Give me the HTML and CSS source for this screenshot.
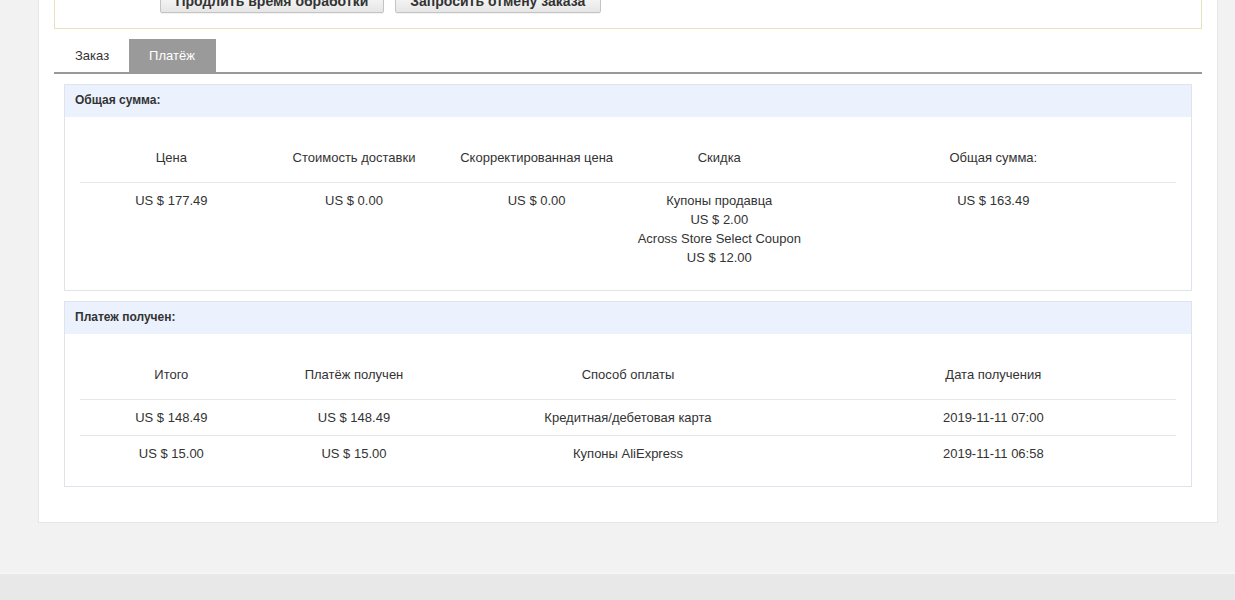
FILE: index.html
```html
<!DOCTYPE html>
<html lang="ru">
<head>
<meta charset="utf-8">
<title>Платёж</title>
<link rel="stylesheet" href="styles.css">
</head>
<body>
<div class="page">
  <div class="panel">
    <div class="notice">
      <div class="actions">
        <button class="btn" type="button">Продлить время обработки</button>
        <button class="btn" type="button">Запросить отмену заказа</button>
      </div>
    </div>

    <div class="tabs">
      <div class="tab">Заказ</div>
      <div class="tab tab-active">Платёж</div>
    </div>

    <div class="section">
      <div class="section-head">Общая сумма:</div>
      <div class="section-body">
        <table class="grid">
          <colgroup>
            <col class="c1"><col class="c1"><col class="c1"><col class="c1"><col class="c2">
          </colgroup>
          <thead>
            <tr>
              <th>Цена</th>
              <th>Стоимость доставки</th>
              <th>Скорректированная цена</th>
              <th>Скидка</th>
              <th>Общая сумма:</th>
            </tr>
          </thead>
          <tbody>
            <tr>
              <td>US $ 177.49</td>
              <td>US $ 0.00</td>
              <td>US $ 0.00</td>
              <td>Купоны продавца<br>US $ 2.00<br>Across Store Select Coupon<br>US $ 12.00</td>
              <td>US $ 163.49</td>
            </tr>
          </tbody>
        </table>
      </div>
    </div>

    <div class="section">
      <div class="section-head">Платеж получен:</div>
      <div class="section-body">
        <table class="grid">
          <colgroup>
            <col class="c1"><col class="c1"><col class="c2"><col class="c2">
          </colgroup>
          <thead>
            <tr>
              <th>Итого</th>
              <th>Платёж получен</th>
              <th>Способ оплаты</th>
              <th>Дата получения</th>
            </tr>
          </thead>
          <tbody>
            <tr>
              <td>US $ 148.49</td>
              <td>US $ 148.49</td>
              <td>Кредитная/дебетовая карта</td>
              <td>2019-11-11 07:00</td>
            </tr>
            <tr>
              <td>US $ 15.00</td>
              <td>US $ 15.00</td>
              <td>Купоны AliExpress</td>
              <td>2019-11-11 06:58</td>
            </tr>
          </tbody>
        </table>
      </div>
    </div>
  </div>
  <div class="footer"></div>
</div>
</body>
</html>
```

FILE: styles.css
```css
html, body {
  margin: 0;
  padding: 0;
  height: 100%;
  overflow: hidden;
}

body {
  background: #f2f2f2;
  font-family: "Liberation Sans", Arial, sans-serif;
  font-size: 13px;
  color: #333;
}

.page {
  padding: 0 17px 0 38px;
}

.panel {
  margin-top: -26px;
  background: #fff;
  border: 1px solid #e6e6e6;
  border-top: 0;
  padding: 0 15px 35px 15px;
}

.notice {
  border: 1px solid #e6e2bc;
  background: #fff;
  padding: 14px 0 15px 105px;
}

.actions {
  display: flex;
  gap: 11px;
}

.btn {
  height: 24px;
  padding: 0 14.5px;
  border: 1px solid #c4c4c4;
  border-radius: 2px;
  background: linear-gradient(#fdfdfd, #e6e6e6);
  font-family: "Liberation Sans", Arial, sans-serif;
  font-size: 14px;
  font-weight: bold;
  color: #333;
  box-shadow: 0 1px 0 rgba(0,0,0,0.05);
}

.tabs {
  display: flex;
  margin-top: 10px;
  border-bottom: 2px solid #999;
}

.tab {
  height: 33px;
  line-height: 33px;
  padding: 0 20px 0 21px;
  font-size: 13px;
  color: #333;
  background: #fff;
}

.tab-active {
  background: #9a9a9a;
  color: #fff;
  padding: 0 21px 0 20px;
}

.section {
  margin: 10px 10px 0 10px;
  border: 1px solid #dfe4ec;
}

.section-head {
  height: 32px;
  line-height: 31px;
  padding: 0 10px;
  background: #ecf2fd;
  font-weight: bold;
  font-size: 12px;
  color: #333;
}

.section-body {
  padding: 15px;
}

.grid {
  width: 100%;
  border-collapse: collapse;
  table-layout: fixed;
  font-size: 13px;
}

.c1 { width: 16.666%; }
.c2 { width: 33.333%; }

.grid th {
  height: 48px;
  padding: 2px 0 0 0;
  font-weight: normal;
  text-align: center;
  vertical-align: middle;
  border-bottom: 1px solid #e6e6e6;
  line-height: 16px;
}

.grid td {
  padding: 8px 0;
  text-align: center;
  vertical-align: top;
  line-height: 19px;
  border-bottom: 1px solid #e6e6e6;
}

.grid tbody tr:last-child td {
  border-bottom: 0;
}

.footer {
  margin: 49px -17px 0 -38px;
  border-top: 2px solid #f6f6f6;
  height: 40px;
  background: #e8e8e8;
}
```
